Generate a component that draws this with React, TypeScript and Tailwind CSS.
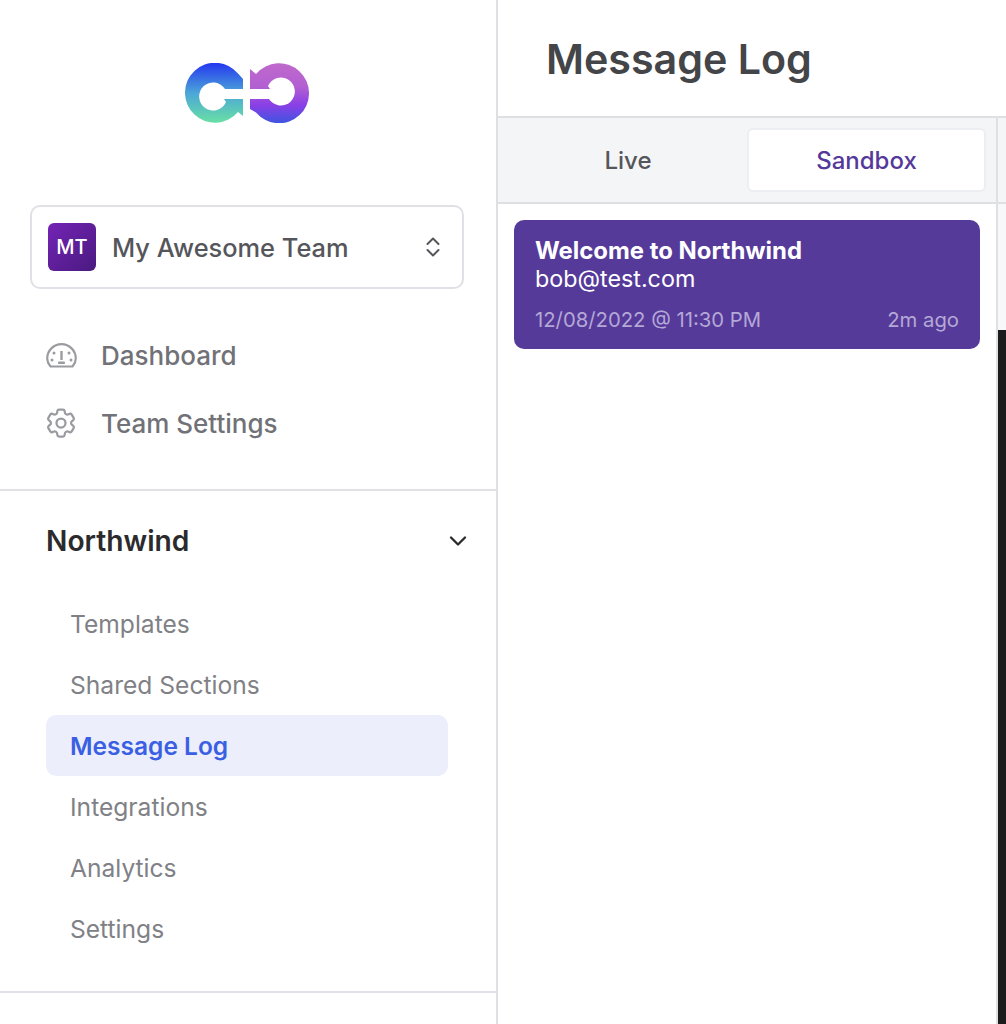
import React from "react";
import { ChevronDown } from "lucide-react";
import { HiOutlineCog6Tooth } from "react-icons/hi2";

const Logo = () => (
  <svg width="124" height="60" viewBox="185 63 124 60" className="block">
    <defs>
      <linearGradient id="logoLeft" x1="0" y1="63" x2="0" y2="123" gradientUnits="userSpaceOnUse">
        <stop offset="0" stopColor="#2437f0" />
        <stop offset="0.5" stopColor="#4ca6d8" />
        <stop offset="1" stopColor="#69e0a4" />
      </linearGradient>
      <linearGradient id="logoRight" x1="0" y1="63" x2="0" y2="123" gradientUnits="userSpaceOnUse">
        <stop offset="0" stopColor="#c069cc" />
        <stop offset="0.4" stopColor="#b25fd2" />
        <stop offset="0.7" stopColor="#8a3fe6" />
        <stop offset="1" stopColor="#3f55e0" />
      </linearGradient>
    </defs>
    <path
      fill="url(#logoLeft)"
      d="M243 79 L243 89 L225 89 A14 14 0 1 0 226 102 L224 99 L243 99 L243 116 L238 112 A30 30 0 1 1 238 73.5 Z"
    />
    <path
      fill="url(#logoRight)"
      d="M250 109 L250 99 L269 99 A14 14 0 1 0 268 86 L270 89 L250 89 L250 69 L256 74 A30 30 0 1 1 256 112.5 Z"
    />
  </svg>
);

const GaugeIcon = () => (
  <svg width="31" height="25" viewBox="0 0 31 25" fill="none" stroke="#9b9ca1" strokeWidth="2.2" className="block">
    <path d="M4.5 23.5 C2.4 21 1.2 18.4 1.2 15.5 A14.3 14.3 0 0 1 29.8 15.5 C29.8 18.4 28.6 21 26.5 23.5 Z" strokeLinejoin="round" />
    <path d="M15.5 8 V17" strokeWidth="2.4" />
    <path d="M12.5 19 H18.5 V20.5 H12.5 Z" fill="#9b9ca1" strokeWidth="1" />
    <circle cx="8" cy="10" r="1.5" fill="#9b9ca1" stroke="none" />
    <circle cx="23" cy="10" r="1.5" fill="#9b9ca1" stroke="none" />
    <circle cx="6" cy="17" r="1.5" fill="#9b9ca1" stroke="none" />
    <circle cx="25" cy="17" r="1.5" fill="#9b9ca1" stroke="none" />
  </svg>
);

const SortIcon = () => (
  <svg width="14" height="20" viewBox="0 0 14 20" fill="none" stroke="#55565b" strokeWidth="2" strokeLinecap="round" strokeLinejoin="round">
    <path d="M1.5 7 L7 1.5 L12.5 7" />
    <path d="M1.5 13 L7 18.5 L12.5 13" />
  </svg>
);

const projectLinks = ["Templates", "Shared Sections", "Message Log", "Integrations", "Analytics", "Settings"];

export default function App() {
  return (
    <div className="flex h-[1024px] w-[1006px] overflow-hidden bg-white font-['Inter',sans-serif]">
      <aside className="flex w-[498px] shrink-0 flex-col border-r-2 border-[#dfe0e4]">
        <div className="flex justify-center pt-[63px] pr-[2px] pb-[82px]">
          <Logo />
        </div>

        <div className="mx-[30px] flex h-[84px] w-[434px] items-center rounded-[10px] border-2 border-[#e0e0e6] pl-4 pr-[22px]">
          <div className="flex h-12 w-12 items-center justify-center rounded-md bg-gradient-to-br from-[#7423b5] to-[#4a1a80] text-[20px] font-medium text-white">
            MT
          </div>
          <span className="ml-4 flex-1 pt-[3px] text-[25.4px] font-medium text-[#55565b]">My Awesome Team</span>
          <SortIcon />
        </div>

        <nav className="flex flex-col gap-[28px] pt-[46px] pl-[46px] pb-[46px]">
          <div className="flex h-10 items-center">
            <span className="flex w-[56px] items-center"><GaugeIcon /></span>
            <span className="-ml-px text-[26px] font-medium text-[#717277]">Dashboard</span>
          </div>
          <div className="flex h-10 items-center">
            <span className="flex w-[56px] items-center"><HiOutlineCog6Tooth className="-ml-[3px] h-[36px] w-[36px] text-[#9b9ca1]" /></span>
            <span className="-ml-px text-[26px] font-medium text-[#717277]">Team Settings</span>
          </div>
        </nav>

        <section className="h-[504px] border-y-2 border-[#e0e0e6] pl-[46px] pr-[48px]">
          <div className="flex h-[100px] items-center justify-between">
            <span className="text-[28.2px] font-semibold text-[#2b2b2e]">Northwind</span>
            <ChevronDown className="mr-[-24px] h-7 w-7 text-[#2b2b2e]" strokeWidth={2} />
          </div>
          <ul className="mt-[2px] flex flex-col">
            {projectLinks.map((name) => (
              <li
                key={name}
                className={
                  name === "Message Log"
                    ? "flex h-[61px] items-center rounded-[10px] bg-[#eceffb] pl-6 pt-[2px] text-[24.5px] font-semibold text-[#3b5fe3]"
                    : "flex h-[61px] items-center pl-6 pt-[2px] text-[24.6px] text-[#808186]"
                }
              >
                {name}
              </li>
            ))}
          </ul>
        </section>
      </aside>

      <main className="flex min-w-0 flex-1 flex-col">
        <header className="flex h-[118px] shrink-0 items-center border-b-2 border-[#dfe0e4] pl-[48px] pt-[4px]">
          <h1 className="text-[41.2px] font-semibold text-[#444548]">Message Log</h1>
        </header>
        <div className="flex flex-1">
          <div className="w-[500px] shrink-0 border-r-2 border-[#dfe0e4]">
            <div className="flex h-[86px] items-center border-b-2 border-[#dfe0e4] bg-[#f4f5f7] pl-[11px] pr-[10px]">
              <div className="flex h-[62px] flex-1 items-center justify-center pt-[2px] text-[24px] font-medium text-[#55565b]">Live</div>
              <div className="flex h-[64px] w-[239px] items-center justify-center rounded-md border-2 border-[#eceef2] bg-white pt-[2px] text-[24px] font-medium text-[#55399a]">
                Sandbox
              </div>
            </div>
            <div className="px-4 pt-4">
              <div className="h-[129px] w-[466px] rounded-[10px] bg-[#553a9a] pl-[21px] pr-[21px] pt-[17px]">
                <div className="text-[23.9px] leading-[28px] font-bold text-white">Welcome to Northwind</div>
                <div className="text-[23.3px] leading-[28px] text-white">bob@test.com</div>
                <div className="mt-[12px] flex justify-between text-[20.3px] text-[#b4a8d6]">
                  <span>12/08/2022 @ 11:30 PM</span>
                  <span>2m ago</span>
                </div>
              </div>
            </div>
          </div>
          <div className="flex flex-1 flex-col">
            <div className="h-[86px] border-b-2 border-[#dfe0e4] bg-[#f4f5f7]" />
            <div className="h-[126px] bg-[#f7f8f9]" />
            <div className="flex-1 bg-[#1c1c1c]" />
          </div>
        </div>
      </main>
    </div>
  );
}
